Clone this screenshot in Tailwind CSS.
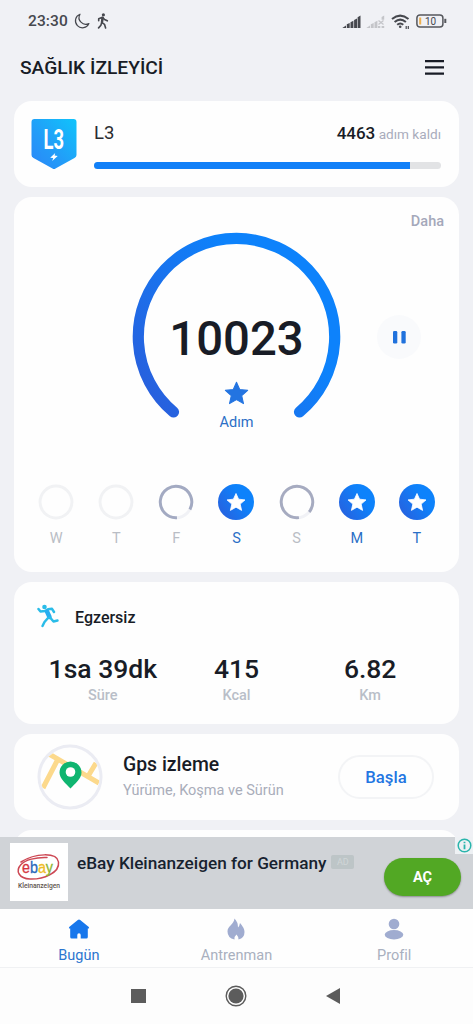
<!DOCTYPE html>
<html lang="tr">
<head>
<meta charset="utf-8">
<title>Sağlık İzleyici</title>
<script src="https://cdn.jsdelivr.net/npm/@tailwindcss/browser@4"></script>
</head>
<body class="bg-[#f0f1f5] font-['Roboto',sans-serif] text-[#181c26]">
<svg class="absolute w-0 h-0" aria-hidden="true">
  <defs>
    <linearGradient id="blue" x1="0" y1="1" x2="1" y2="0.3"><stop offset="0" stop-color="#2b5cda"/><stop offset=".75" stop-color="#0d82fb"/></linearGradient>
    <linearGradient id="cyan" x1="0" y1="1" x2="1" y2="0"><stop offset="0" stop-color="#2b86f8"/><stop offset=".4" stop-color="#239bf8"/><stop offset="1" stop-color="#10c4fb"/></linearGradient>
    <symbol id="star" viewBox="0 0 24 24"><path d="M12 1.200l3.100 7 7.600.8-5.700 5.100 1.700 7.600L12 17.900l-6.700 3.800L7 14.100 1.300 9l7.600-.8z" stroke-linejoin="round" stroke-width="1" stroke="currentColor" fill="currentColor"/></symbol>
    <symbol id="done" viewBox="0 0 36 36"><circle cx="18" cy="18" r="18" fill="url(#blue)"/><path d="M18 9.500l2.600 5.700 6.400.7-4.800 4.200 1.400 6.300-5.600-3.200-5.600 3.200 1.400-6.300-4.800-4.200 6.400-.7z" fill="#fff" stroke="#fff" stroke-width=".8" stroke-linejoin="round"/></symbol>
  </defs>
</svg>
<div class="w-[473px] h-[1024px] flex flex-col overflow-hidden">
  <header class="h-[101px] shrink-0">
    <div class="h-[42px] pl-7 pr-[26px] flex items-center text-[#46484e]">
      <span class="text-[15.500px] leading-[20px] font-medium tracking-[0.100px] w-[46px]">23:30</span>
      <svg class="w-4 h-4" viewBox="0 0 16 16" fill="none" stroke="currentColor" stroke-width="1.200" stroke-linejoin="round"><path d="M6 1.200A7 7 0 1 0 14.900 10.500 6.700 6.700 0 0 1 6 1.200z"/></svg>
      <svg class="w-3 h-4 ml-[7px]" viewBox="0 0 12 16" fill="none" stroke="currentColor" stroke-width="1.600" stroke-linecap="round" stroke-linejoin="round"><circle cx="6.400" cy="1.800" r="1.600" fill="currentColor" stroke="none"/><path d="M1.700 7.800V5.700L5.500 4.200 7.600 6.500 10.300 7.800M5.500 4.500L4.700 9.300 7.500 11.300 8.600 15M4.600 9.800L3.900 12.300 1.600 14.900"/><path d="M5.700 5L5 9" stroke-width="2.400"/></svg>
      <div class="ml-auto flex items-center">
        <svg class="w-[19px] h-[13px]" viewBox="0 0 19 13" fill="currentColor"><path d="M.3 13L4 10.500V13zM4.800 9.300l2.900-1.200V13H4.800zM8.500 7.300l2.900-1.500V13H8.500zM12.100 4.900l2.900-1.500V13h-2.900zM15.600 2.300l2.900-1.900V13h-2.900z"/></svg>
        <svg class="w-[19px] h-[13px] ml-[5px] text-[#c4c5c9]" viewBox="0 0 19 13" fill="currentColor"><path d="M.3 13L4 10.500V13zM4.800 9.300l2.900-1.200V13H4.800zM8.500 7.300l2.900-1.500V13H8.500z"/><path d="M12 11h2.300v2H12zM15.600 2l2.600-1.600v4.400h-2.600zM15.600 11h2.600v2h-2.600z"/><path d="M12.500 5.500l5 4M17.500 5.500l-5 4" stroke="currentColor" stroke-width="1.300"/></svg>
        <svg class="w-[19px] h-4 ml-[6px] mt-px" viewBox="0 0 19 16" fill="none" stroke="currentColor" stroke-width="2"><path d="M1 5Q9.200-1.800 17.500 5M3.600 8Q9.200 3.200 14.900 8M6.200 10.700Q9.200 8.200 12.300 10.700"/><circle cx="9.200" cy="12.800" r="1.300" fill="currentColor" stroke="none"/><path d="M15.200 15v-3M17.300 12v3" stroke-width="1.200"/></svg>
        <svg class="w-[31px] h-[14px] ml-[6px]" viewBox="0 0 31 14"><rect x=".9" y=".9" width="26" height="12.200" rx="3" fill="none" stroke="#55575c" stroke-width="1.500"/><rect x="28.300" y="4.800" width="2" height="4.200" fill="#55575c"/><rect x="3.200" y="3.500" width="2" height="7" fill="#eeb04e"/><text x="14.500" y="10.500" font-size="10" text-anchor="middle" fill="#46484e">10</text></svg>
      </div>
    </div>
    <div class="h-[50px] pl-5 pr-[29px] flex items-center justify-between">
      <h1 class="text-[19.200px] font-medium leading-6 mt-px">SAĞLIK İZLEYİCİ</h1>
      <svg class="w-[19px] h-[15px]" viewBox="0 0 19 15" fill="#181c26"><path d="M0 0h19v2.300H0zM0 6.200h19v2.300H0zM0 12.400h19v2.300H0z"/></svg>
    </div>
  </header>
  <main class="px-[14px] h-[736px] shrink-0 flex flex-col gap-[10px] overflow-hidden">
    <section class="h-[86px] shrink-0 bg-[#fefefe] rounded-[18px] pl-[17px] pr-[18px] flex">
      <svg class="w-[46px] h-[52px] mt-[18px]" viewBox="0 0 46 52"><path d="M3.500 0H42.500Q45.500 0 45.500 3V36Q45.500 38 43.500 39L24.500 49.500Q23 50.500 21.500 49.500L2.500 39Q.5 38 .5 36V3Q.5 0 3.500 0z" fill="url(#cyan)"/><text x="12.500" y="30" font-size="27.500" font-weight="700" fill="#fff" textLength="20.500" lengthAdjust="spacingAndGlyphs">L3</text><path d="M24.200 34l-5 4.700 3 .4-1 3 5.500-5-3.100-.6z" fill="#fff"/></svg>
      <div class="ml-[17px] flex-1">
        <div class="h-[61px] pt-[20px] flex justify-between">
          <span class="text-[18.500px] leading-6 text-[#2a2c31]">L3</span>
          <span class="leading-6 text-[13.600px] text-[#a9acbc]"><span class="text-[17px] font-medium text-[#181c26]">4463</span> adım kaldı</span>
        </div>
        <div class="h-[7px] rounded-full bg-[#e2e3e5] overflow-hidden"><div class="h-full bg-[#1180f8]" style="width:91.200%"></div></div>
      </div>
    </section>
    <section class="h-[375px] shrink-0 bg-[#fefefe] rounded-[18px] relative flex flex-col items-center">
      <span class="self-end mr-[15px] mt-[15px] text-[14.500px] leading-5 font-medium text-[#a4a8ba]">Daha</span>
      <div class="relative w-[210px] h-[190px]">
        <svg class="w-[210px] h-[190px]" viewBox="0.500 0 210 190"><path d="M42 180A98.200 98.200 0 1 1 168 180" fill="none" stroke="url(#blue)" stroke-width="11.200" stroke-linecap="round"/></svg>
        <div class="absolute inset-0 flex flex-col items-center">
          <span class="mt-[77px] text-[47.300px] leading-[60px] font-medium">10023</span>
          <svg class="w-[25px] h-[25px] shrink-0 mt-[12px] text-[#2374e1]"><use href="#star"/></svg>
          <span class="mt-[7px] text-[14.500px] leading-5 text-[#2b6fc6]">Adım</span>
        </div>
      </div>
      <div class="absolute right-[38px] top-[118px] w-[44px] h-[44px] rounded-full bg-[#f9fafc] flex items-center justify-center"><svg class="w-[13px] h-[13px]" viewBox="0 0 13 13" fill="#2072dd"><rect x="0" width="4.300" height="12.500" rx="1.300"/><rect x="8.400" width="4.300" height="12.500" rx="1.300"/></svg></div>
      <div class="mt-[62px] w-[421px] grid grid-cols-7 justify-items-center text-[14.500px] text-[#b9bdc5]">
        <div class="flex flex-col items-center"><svg class="w-[36px] h-[36px]" viewBox="0 0 37 37"><circle cx="18.500" cy="18.500" r="16.400" fill="none" stroke="#f1f2f4" stroke-width="3"/></svg><span class="mt-[9px] leading-5">W</span></div>
        <div class="flex flex-col items-center"><svg class="w-[36px] h-[36px]" viewBox="0 0 37 37"><circle cx="18.500" cy="18.500" r="16.400" fill="none" stroke="#f1f2f4" stroke-width="3"/></svg><span class="mt-[9px] leading-5">T</span></div>
        <div class="flex flex-col items-center"><svg class="w-[36px] h-[36px]" viewBox="0 0 37 37" fill="none" stroke-width="3"><circle cx="18.500" cy="18.500" r="16.200" stroke="#f1f2f6"/><path d="M19.500 34.700A16.200 16.200 0 1 1 32.800 26.200" stroke="#a3aac2"/></svg><span class="mt-[9px] leading-5">F</span></div>
        <div class="flex flex-col items-center text-[#2b6fc6]"><svg class="w-[36px] h-[36px]"><use href="#done"/></svg><span class="mt-[9px] leading-5">S</span></div>
        <div class="flex flex-col items-center"><svg class="w-[36px] h-[36px]" viewBox="0 0 37 37" fill="none" stroke-width="3"><circle cx="18.500" cy="18.500" r="16.200" stroke="#f1f2f6"/><path d="M20.500 34.600A16.200 16.200 0 1 1 31 28.800" stroke="#a6abc0"/></svg><span class="mt-[9px] leading-5">S</span></div>
        <div class="flex flex-col items-center text-[#2b6fc6]"><svg class="w-[36px] h-[36px]"><use href="#done"/></svg><span class="mt-[9px] leading-5">M</span></div>
        <div class="flex flex-col items-center text-[#2b6fc6]"><svg class="w-[36px] h-[36px]"><use href="#done"/></svg><span class="mt-[9px] leading-5">T</span></div>
      </div>
    </section>
    <section class="h-[142px] shrink-0 bg-[#fefefe] rounded-[18px] pt-[22px]">
      <div class="h-[24px] pl-[23px] flex items-center">
        <svg class="w-[23px] h-[24px]" viewBox="0 0 23 24" fill="none" stroke="#2abce8" stroke-width="2.500" stroke-linecap="round" stroke-linejoin="round"><circle cx="7.500" cy="3" r="2.300" fill="#2abce8" stroke="none"/><path d="M1.500 5L3.500 7.500 8 7 11 5.300 15 4.800 17 8"/><path d="M10 7.500L12.500 13" stroke-width="4.500" stroke="#27aef0"/><path d="M13 13.500L16.500 17.500 20.500 16.500M11 14L7.500 18 5.500 22"/></svg>
        <span class="ml-[15px] text-[16px] font-medium leading-6 mt-[4px]">Egzersiz</span>
      </div>
      <div class="mt-[25px] px-[22px] grid grid-cols-3 text-center">
        <div><div class="text-[26.500px] leading-8 font-medium">1sa 39dk</div><div class="mt-[1px] text-[14.500px] leading-5 font-medium text-[#b9bec8]">Süre</div></div>
        <div><div class="text-[26.500px] leading-8 font-medium">415</div><div class="mt-[1px] text-[14.500px] leading-5 font-medium text-[#b9bec8]">Kcal</div></div>
        <div><div class="text-[26.500px] leading-8 font-medium">6.82</div><div class="mt-[1px] text-[14.500px] leading-5 font-medium text-[#b9bec8]">Km</div></div>
      </div>
    </section>
    <section class="h-[86px] shrink-0 bg-[#fefefe] rounded-[18px] pl-[23px] pr-[25px] flex items-center">
      <svg class="w-[66px] h-[66px] shrink-0" viewBox="0 0 66 66"><defs><clipPath id="map"><circle cx="33" cy="33" r="29.500"/></clipPath></defs><circle cx="33" cy="33" r="31" fill="#fefefe" stroke="#ebecf3" stroke-width="3"/><g clip-path="url(#map)" stroke="#fcd98c" stroke-width="5" fill="none"><path d="M12 10L62 39M21 15L6 44M59 19L50 34"/></g><path d="M33.500 44.500C29 39.500 22.500 35 22.500 28.500a11 11 0 0 1 22 0C44.500 35 38 39.500 33.500 44.500z" fill="#0fb570"/><circle cx="33.500" cy="28" r="4.800" fill="#fff"/></svg>
      <div class="ml-[20px] flex-1">
        <div class="text-[19.400px] leading-6 font-medium">Gps izleme</div>
        <div class="mt-[4px] text-[14.500px] leading-5 text-[#a9adba]">Yürüme, Koşma ve Sürün</div>
      </div>
      <button class="w-[96px] h-[44px] rounded-full border-2 border-[#f3f4f6] text-[16.700px] font-medium text-[#2376e2] pt-[2px]">Başla</button>
    </section>
    <section class="h-[86px] shrink-0 bg-[#fefefe] rounded-[18px]"></section>
  </main>
  <aside class="h-[72px] shrink-0 bg-[#d0d3d7] relative flex pl-[10px] pr-[12px]">
    <svg class="w-[58px] h-[58px] mt-[6px] bg-white" viewBox="0 0 58 58"><g fill="none" stroke="#cd4854" stroke-linecap="round"><path d="M11 19C25 10 47 9 48.500 19 50 30 33 36.500 20 36 9 35.500 5 28 11 21.500 15 17 26 14 37 14.500" stroke-width="1.500"/></g><text x="12" y="30" font-size="16" font-family="Liberation Sans" stroke-width=".3" textLength="31" lengthAdjust="spacingAndGlyphs"><tspan fill="#d6343d" stroke="#d6343d">e</tspan><tspan fill="#2b68bb" stroke="#2b68bb">b</tspan><tspan fill="#efbd27" stroke="#efbd27">a</tspan><tspan fill="#8cb52e" stroke="#8cb52e">y</tspan></text><text x="8" y="45" font-size="7.500" font-weight="500" fill="#625650" textLength="42" lengthAdjust="spacingAndGlyphs">Kleinanzeigen</text></svg>
    <span class="ml-[9px] mt-[14px] text-[17.200px] leading-6 font-medium text-[#17222f] whitespace-nowrap">eBay Kleinanzeigen for Germany</span>
    <span class="ml-[5px] mt-[18px] w-[23px] h-[14px] rounded-[2px] bg-[#bdc5c7] text-[9px] leading-[14px] text-center text-[#d0d6d7]">AD</span>
    <button class="ml-auto mt-[21px] w-[77px] h-[38px] rounded-full bg-[#52a824] shadow-[0_1px_2px_#0005] text-white text-[14.500px] font-bold pt-[2px]">AÇ</button>
    <div class="absolute right-0 top-0 w-[18px] h-[17px] bg-[#eef1f4] flex justify-center items-center"><svg class="w-[15px] h-[15px]" viewBox="0 0 15 15" fill="none" stroke="#2ab5ac"><circle cx="7.500" cy="7.500" r="6.300" stroke-width="1.500"/><path d="M7.500 3.800v1.500M7.500 6.500v4.800" stroke-width="1.800"/></svg></div>
  </aside>
  <nav class="h-[59px] shrink-0 bg-[#fefefe] border-b border-[#f0f1f3] grid grid-cols-3 text-[14.500px] leading-5 text-[#a9b0bf]">
    <div class="flex flex-col items-center text-[#2b75cf]"><svg class="w-[22px] h-[20px] mt-[10px]" viewBox="0 0 22 20"><path d="M9.800 1Q11 0 12.200 1L20.800 8Q21.800 9.500 20.300 9.600H19.800V18Q19.800 19.500 18.300 19.500H12.700V16Q12.700 14.300 11 14.300T9.300 16V19.500H3.700Q2.200 19.500 2.200 18V9.600H1.700Q.2 9.500 1.200 8z" fill="#1777ec"/></svg><span class="mt-[7px]">Bugün</span></div>
    <div class="flex flex-col items-center"><svg class="w-[18px] h-[22px] mt-[9px]" viewBox="0 0 18 22"><path d="M7.500.5Q11 4 11 9.500 12.500 8 13 5 17.500 10 17.500 14 17.500 20 11.500 21.500 11.500 18.500 9.500 16.500 7 18.500 7.500 21.500 .5 20 .5 13.500C.5 8 7 6.500 7.500.5z" fill="#a0acd0"/></svg><span class="mt-[6px]">Antrenman</span></div>
    <div class="flex flex-col items-center"><svg class="w-[20px] h-[22px] mt-[9px]" viewBox="0 0 20 22" fill="#a0acd0"><circle cx="10" cy="6" r="5.300"/><ellipse cx="10" cy="16.700" rx="9.300" ry="4.700"/></svg><span class="mt-[6px]">Profil</span></div>
  </nav>
  <div class="h-[56px] shrink-0 bg-[#fdfdfd] flex items-center pl-[131px] text-[#5c5c5c]">
    <i class="w-[15px] h-[14px] bg-current"></i>
    <svg class="ml-[79px] w-[22px] h-[22px]" viewBox="0 0 22 22"><circle cx="11" cy="11" r="9.800" fill="none" stroke="currentColor" stroke-width="1.400"/><circle cx="11" cy="11" r="7.600" fill="currentColor"/></svg>
    <svg class="ml-[79px] w-[14px] h-[16px]" viewBox="0 0 14 16"><path d="M14 0V16L0 8z" fill="currentColor"/></svg>
  </div>
</div>
</body>
</html>
